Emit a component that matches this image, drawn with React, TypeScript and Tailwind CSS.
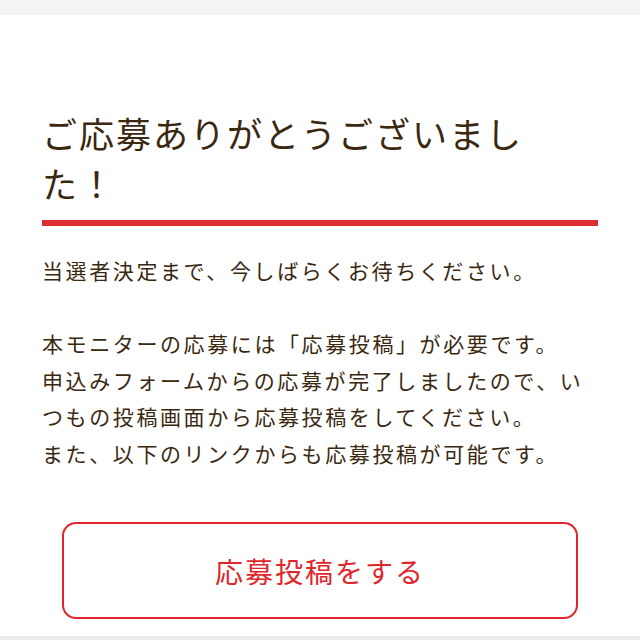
import React from 'react';

const font = { fontFamily: '"Noto Sans CJK JP", "Noto Sans", sans-serif' };

const App = () => {
  return (
    <div className="h-[640px] w-[640px] overflow-hidden bg-white flex flex-col" style={font}>
      {/* top band */}
      <div className="h-[15px] bg-[#f5f4f2] shrink-0" />

      <main className="flex-1 px-[42px] pt-[93px] text-[#3a2810]">
        <h1 className="text-[35px] leading-[50px] tracking-[2px] pr-[24px]">
          ご応募ありがとうございました！
        </h1>
        <div className="mt-[12px] h-[6px] bg-[#dc3030]" />

        <div className="mt-[26px] text-[21px] leading-[36.5px] tracking-[2.6px] whitespace-nowrap">
          <p>当選者決定まで、今しばらくお待ちください。</p>
          <p className="mt-[36.5px]">本モニターの応募には「応募投稿」が必要です。</p>
          <p>申込みフォームからの応募が完了しましたので、い</p>
          <p>つもの投稿画面から応募投稿をしてください。</p>
          <p>また、以下のリンクからも応募投稿が可能です。</p>
        </div>

        <div className="mt-[51px] flex justify-center">
          <button className="w-[516px] h-[97px] rounded-[14px] border-2 border-[#e0262a] text-[#e0262a] text-[28px] tracking-[2px] leading-none flex items-center justify-center">
            応募投稿をする
          </button>
        </div>
      </main>

      <div className="h-[4px] bg-[#ececec] shrink-0" />
    </div>
  );
};

export default App;
